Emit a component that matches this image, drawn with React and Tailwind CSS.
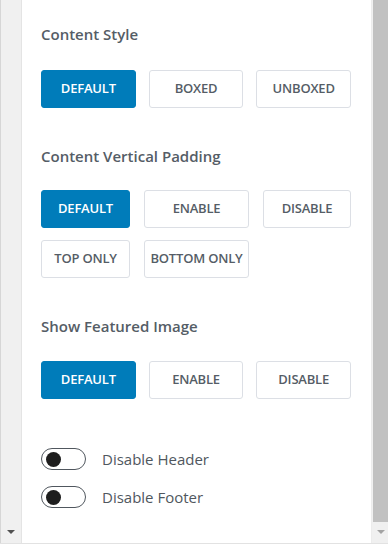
import { useState } from 'react';

const font = { fontFamily: '"Open Sans", "Noto Sans", Arial, sans-serif' };

function Choice({ label, active }) {
  return (
    <button
      className={
        'h-[38px] rounded-[3px] border text-[13px] font-semibold uppercase tracking-[-0.2px] ' +
        (active
          ? 'border-[#007cba] bg-[#007cba] text-white'
          : 'border-[#dcdfe5] bg-white text-[#555d66]')
      }
    >
      {label}
    </button>
  );
}

function Heading({ children, className }) {
  return (
    <h3 className={'h-[20px] text-[15px] leading-[20px] font-semibold text-[#555d66] ' + className}>
      {children}
    </h3>
  );
}

function Toggle({ label }) {
  const [on, setOn] = useState(false);
  return (
    <div className="flex h-[22px] items-center gap-[16px]">
      <button
        onClick={() => setOn(!on)}
        className={
          'flex h-[22px] w-[45px] items-center rounded-full border border-[#50575e] px-[4px] ' +
          (on ? 'justify-end' : 'justify-start')
        }
      >
        <span className="h-[15px] w-[15px] rounded-full bg-[#1e1e1e]" />
      </button>
      <span className="text-[15px] leading-[20px] text-[#50575e]">{label}</span>
    </div>
  );
}

export default function App() {
  return (
    <div className="flex h-[547px] w-[388px] flex-col bg-white" style={font}>
      <div className="flex flex-1 overflow-hidden">
        {/* left scroll strip */}
        <div className="flex w-[22px] flex-col justify-end border-l border-r border-l-[#d6d6d6] border-r-[#e4e4e4] bg-[#f0f0f0] pb-[9px]">
          <span className="ml-[6px] h-0 w-0 border-x-[4px] border-t-[4px] border-x-transparent border-t-[#505050]" />
        </div>

        {/* settings panel */}
        <div className="flex-1 pl-[19px] pr-[20px] pt-[24px]">
          <Heading className="mb-[26px]">Content Style</Heading>
          <div className="mb-[38px] grid grid-cols-3 gap-x-[13px]">
            <Choice label="Default" active />
            <Choice label="Boxed" />
            <Choice label="Unboxed" />
          </div>

          <Heading className="mb-[24px]">Content Vertical Padding</Heading>
          <div className="mb-[38px] grid grid-cols-[89px_105px_88px] gap-x-[14px] gap-y-[12px]">
            <Choice label="Default" active />
            <Choice label="Enable" />
            <Choice label="Disable" />
            <Choice label="Top only" />
            <Choice label="Bottom only" />
          </div>

          <Heading className="mb-[25px]">Show Featured Image</Heading>
          <div className="mb-[49px] grid grid-cols-3 gap-x-[13px]">
            <Choice label="Default" active />
            <Choice label="Enable" />
            <Choice label="Disable" />
          </div>

          <div className="flex flex-col gap-[16px]">
            <Toggle label="Disable Header" />
            <Toggle label="Disable Footer" />
          </div>
        </div>

        {/* right scrollbar */}
        <div className="flex w-[17px] flex-col border-l border-[#ececec] bg-[#f0f0f0] pl-[1px]">
          <div className="h-[522px] bg-[#c1c1c1]" />
          <div className="flex flex-1 items-center justify-center pb-[2px]">
            <span className="h-0 w-0 border-x-[4px] border-t-[4px] border-x-transparent border-t-[#a3a3a3]" />
          </div>
        </div>
      </div>
      <div className="h-[4px] border-t border-[#e2e2e2] bg-white" />
    </div>
  );
}
